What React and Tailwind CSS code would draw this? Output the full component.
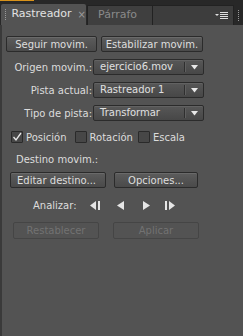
import React from "react";

const Btn = ({ children, className = "" }) => (
  <div
    className={`h-[16px] flex items-center justify-center rounded-[2px] border border-[#2b2b2b] bg-gradient-to-b from-[#5c5c5c] to-[#4a4a4a] text-[#dedede] shadow-[inset_0_1px_0_#6a6a6a] ${className}`}
  >
    {children}
  </div>
);

const Disabled = ({ children, className = "" }) => (
  <div
    className={`h-[17px] flex items-center justify-center rounded-[2px] border border-[#454545] text-[#727272] ${className}`}
  >
    {children}
  </div>
);

const Select = ({ value }) => (
  <div className="w-[111px] h-[16px] flex items-center rounded-[2px] border border-[#2b2b2b] bg-gradient-to-b from-[#575757] to-[#474747] shadow-[inset_0_1px_0_#626262]">
    <div className="flex-1 pl-[6px] text-[#e0e0e0] leading-none">{value}</div>
    <div className="w-px h-[10px] bg-[#2f2f2f]" />
    <div className="w-px h-[10px] bg-[#5f5f5f]" />
    <div className="w-[17px] flex items-center justify-center">
      <svg width="7" height="5" viewBox="0 0 7 5">
        <path d="M0 0 H7 L3.5 4.5 Z" fill="#e8e8e8" />
      </svg>
    </div>
  </div>
);

const Check = ({ checked }) => (
  <div className="w-[12px] h-[12px] rounded-[1px] border border-[#2a2a2a] bg-[#474747] flex items-center justify-center">
    {checked && (
      <svg width="10" height="10" viewBox="0 0 10 10">
        <path d="M1.5 5 L4 8 L9 1" stroke="#e8e8e8" strokeWidth="1.3" fill="none" />
      </svg>
    )}
  </div>
);

const Row = ({ label, value }) => (
  <div className="flex items-center h-[16px]">
    <div className="w-[91px] text-right pr-[1px] text-[#dcdcdc]">{label}</div>
    <Select value={value} />
  </div>
);

export default function App() {
  return (
    <div
      className="w-[243px] h-[336px] bg-[#535353] flex flex-col text-[10px] overflow-hidden"
      style={{ fontFamily: '"DejaVu Sans", Verdana, sans-serif' }}
    >
      {/* top strip */}
      <div className="h-[4px] bg-[#282828] relative">
        <div className="absolute left-0 top-0 w-[34px] h-[1px] bg-[#d9931b]" />
      </div>
      {/* tab bar */}
      <div className="h-[21px] bg-[#282828] flex items-end">
        <div className="h-[21px] w-[85px] ml-[1px] rounded-t-[2px] bg-[#535353] flex items-center text-[#e2e2e2]">
          <div className="ml-[4px] w-[2px] h-[11px] border-l border-dotted border-[#9a9a9a]" />
          <span className="ml-[5px] text-[11px]">Rastreador</span>
          <span className="ml-[6px] text-[#9a9a9a] text-[10px]">×</span>
        </div>
        <div className="h-[20px] w-[66px] ml-[1px] border border-b-0 border-[#222] bg-[#3f3f3f] flex items-center text-[#8a8a8a] text-[11px] pl-[10px]">
          Párrafo
        </div>
        <div className="h-[20px] w-[81px] border-t border-r border-[#222] bg-[#3d3d3d] flex items-center justify-end pr-[5px]">
          <svg width="13" height="8" viewBox="0 0 13 8">
            <path d="M0 2 H4 L2 4 Z" fill="#e0e0e0" />
            <rect x="5" y="0" width="8" height="1" fill="#e0e0e0" />
            <rect x="5" y="2" width="8" height="1" fill="#e0e0e0" />
            <rect x="5" y="4" width="8" height="1" fill="#e0e0e0" />
            <rect x="5" y="6" width="8" height="1" fill="#e0e0e0" />
          </svg>
        </div>
        <div className="h-[20px] flex-1 flex items-center justify-center">
          <div className="w-[2px] h-[11px] border-l border-dotted border-[#9a9a9a]" />
        </div>
      </div>
      {/* body */}
      <div className="flex-1 border-l-2 border-[#3a3a3a] flex flex-col">
        <div className="flex gap-[4px] pl-[4px] mt-[11px]">
          <Btn className="w-[91px]">Seguir movim.</Btn>
          <Btn className="w-[102px]">Estabilizar movim.</Btn>
        </div>
        <div className="flex flex-col gap-[7px] mt-[7px]">
          <Row label="Origen movim.:" value="ejercicio6.mov" />
          <Row label="Pista actual:" value="Rastreador 1" />
          <Row label="Tipo de pista:" value="Transformar" />
        </div>
        <div className="flex items-center mt-[9px] h-[14px] pl-[9px] text-[#dcdcdc]">
          <Check checked />
          <span className="ml-[3px]">Posición</span>
          <div className="ml-[8px]"><Check /></div>
          <span className="ml-[3px]">Rotación</span>
          <div className="ml-[5px]"><Check /></div>
          <span className="ml-[3px]">Escala</span>
        </div>
        <div className="mt-[9px] pl-[14px] h-[12px] flex items-center text-[#dcdcdc]">Destino movim.:</div>
        <div className="flex gap-[8px] pl-[8px] mt-[7px]">
          <Btn className="w-[96px] !justify-start pl-[6px]">Editar destino...</Btn>
          <Btn className="w-[84px]">Opciones...</Btn>
        </div>
        <div className="flex items-center mt-[11px] h-[12px] text-[#dcdcdc]">
          <span className="ml-[31px] w-[56px]">Analizar:</span>
          <svg width="13" height="9" viewBox="0 0 13 9" className="ml-[1px]">
            <path d="M0 4.5 L6 0 V9 Z" fill="#e6e6e6" />
            <rect x="8" y="0" width="2" height="9" fill="#e6e6e6" />
          </svg>
          <svg width="9" height="9" viewBox="0 0 9 9" className="ml-[14px]">
            <path d="M0 4.5 L7 0 V9 Z" fill="#e6e6e6" />
          </svg>
          <svg width="9" height="9" viewBox="0 0 9 9" className="ml-[17px]">
            <path d="M7 4.5 L0 0 V9 Z" fill="#e6e6e6" />
          </svg>
          <svg width="13" height="9" viewBox="0 0 13 9" className="ml-[13px]">
            <rect x="0" y="0" width="2" height="9" fill="#e6e6e6" />
            <path d="M4 0 L10 4.5 L4 9 Z" fill="#e6e6e6" />
          </svg>
        </div>
        <div className="flex gap-[14px] pl-[11px] mt-[11px]">
          <Disabled className="w-[86px]">Restablecer</Disabled>
          <Disabled className="w-[86px]">Aplicar</Disabled>
        </div>
      </div>
    </div>
  );
}
